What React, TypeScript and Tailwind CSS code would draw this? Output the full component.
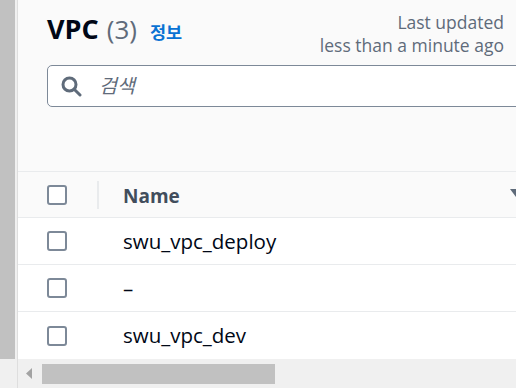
import React from "react";

const rows = ["swu_vpc_deploy", "–", "swu_vpc_dev"];

function Checkbox() {
  return (
    <div className="w-[20px] h-[20px] rounded-[3px] border-2 border-[#7d8998] bg-white shrink-0" />
  );
}

function SearchIcon() {
  return (
    <svg width="21" height="21" viewBox="0 0 21 21" fill="none">
      <circle cx="8.5" cy="8.5" r="6.5" stroke="#5f6b7a" strokeWidth="3" />
      <path d="M13.2 13.2 L19 19" stroke="#5f6b7a" strokeWidth="3" strokeLinecap="round" />
    </svg>
  );
}

export default function App() {
  return (
    <div
      className="w-[516px] h-[388px] flex overflow-hidden bg-white"
      style={{ fontFamily: '"Open Sans", "Noto Sans CJK KR", sans-serif' }}
    >
      {/* left scrollbar */}
      <div className="w-[17px] h-full bg-[#f0f0f0] shrink-0 flex flex-col">
        <div className="w-[15px] h-[359px] bg-[#c1c1c1]" />
      </div>
      <div className="w-[1px] h-full bg-[#dedede] shrink-0" />

      <div className="flex-1 flex flex-col min-w-0 overflow-hidden">
        {/* header */}
        <div className="bg-[#fafafa] h-[172px] pl-[29px] pr-[12px] border-b border-[#e9ebed] shrink-0">
          <div className="flex justify-between items-start">
            <div className="flex items-baseline mt-[13px] h-[31px]">
              <span className="text-[27px] leading-[31px] font-bold text-[#000716]">VPC</span>
              <span className="text-[26px] leading-[31px] text-[#5f6b7a] ml-[8px]">(3)</span>
              <span className="text-[17.5px] font-bold text-[#0972d3] ml-[13px]">정보</span>
            </div>
            <div className="text-right text-[17.5px] leading-[23px] text-[#5f6b7a] mt-[11px]">
              <div>Last updated</div>
              <div>less than a minute ago</div>
            </div>
          </div>
          <div className="mt-[8px] w-[520px] h-[42px] bg-white border border-[#7d8998] rounded-[5px] flex items-center pl-[13px]">
            <SearchIcon />
            <span className="ml-[17px] text-[19.5px] italic text-[#5f6b7a]">검색</span>
          </div>
        </div>

        {/* table header */}
        <div className="h-[46px] bg-[#fafafa] border-b border-[#e9ebed] flex items-center pl-[29px] relative shrink-0">
          <Checkbox />
          <div className="w-[2px] h-[28px] bg-[#e9ebed] ml-[30px]" />
          <span className="ml-[24px] mt-[3px] text-[19px] font-bold text-[#414d5c]">Name</span>
          <svg className="absolute left-[492px] top-[17px]" width="12" height="9" viewBox="0 0 12 9">
            <path d="M0 0 H12 L6 8 Z" fill="#5f6b7a" />
          </svg>
        </div>

        {/* rows */}
        {rows.map((name, i) => (
          <div
            key={i}
            className={
              "h-[47px] flex items-center pl-[29px] shrink-0 " +
              (i < rows.length - 1 ? "border-b border-[#e9ebed]" : "")
            }
          >
            <Checkbox />
            <span className="ml-[56px] text-[20.5px] text-[#000716]">{name}</span>
          </div>
        ))}

        {/* horizontal scrollbar */}
        <div className="mt-auto h-[29px] bg-[#f0f0f0] flex items-center shrink-0">
          <svg className="ml-[8px]" width="6" height="11" viewBox="0 0 6 11">
            <path d="M6 0 V11 L0 5.5 Z" fill="#a3a3a3" />
          </svg>
          <div className="ml-[10px] w-[233px] h-[20px] bg-[#c1c1c1]" />
        </div>
      </div>
    </div>
  );
}
